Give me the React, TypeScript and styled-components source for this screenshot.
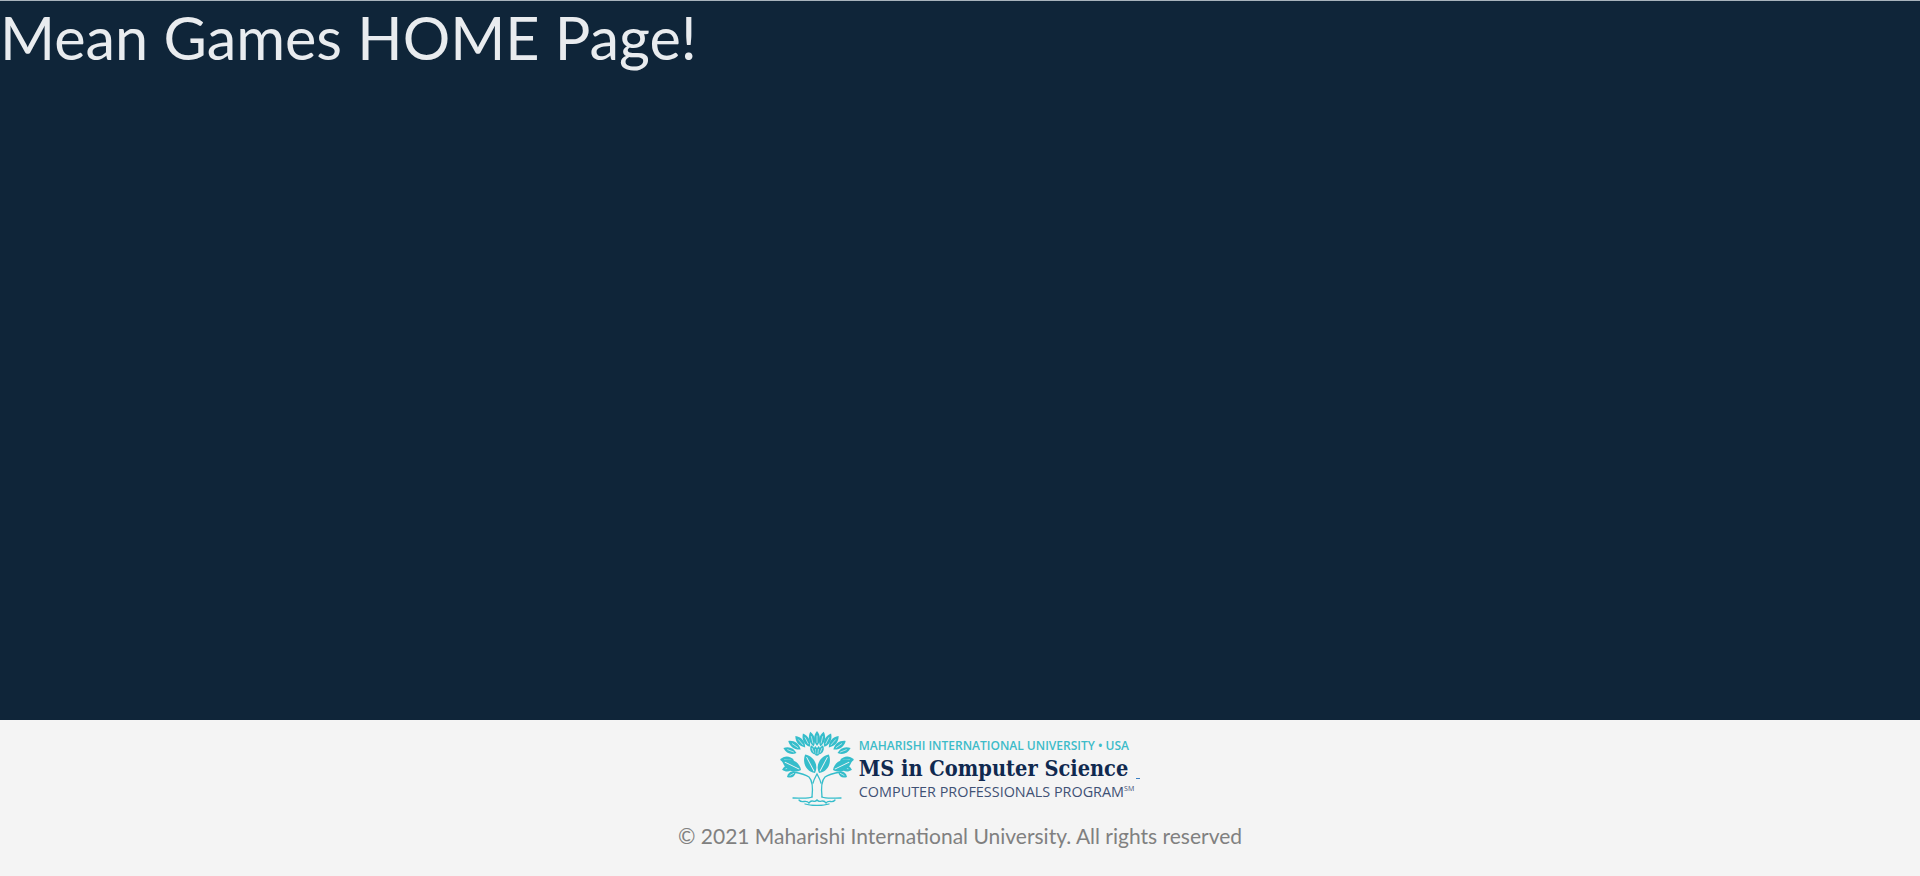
import styled, { createGlobalStyle } from 'styled-components'

const Global = createGlobalStyle`
    html, body {
        margin: 0;
        padding: 0;
    }
    body {
        font-family: "Lato", "Open Sans", sans-serif;
        background-color: #f4f4f4;
    }
`

// leaves of the canopy: angle from the tree centre, distance, length, half width
const leaves = [
    [0, 15, 15, 3.8], [-13, 15, 15, 3.8], [13, 15, 15, 3.8], [-27, 16, 15, 4], [27, 16, 15, 4],
    [-41, 18, 15, 4], [41, 18, 15, 4], [-55, 20, 15, 4], [55, 20, 15, 4],
    [-69, 22, 14, 4], [69, 22, 14, 4], [-88, 23, 14, 4.6], [88, 23, 14, 4.6],
    [-104, 24, 12, 4.2], [104, 24, 12, 4.2], [-118, 24, 10, 3.6], [118, 24, 10, 3.6],
    [-7, 5, 10, 2.8], [7, 5, 10, 2.8], [-21, 7, 10, 3], [21, 7, 10, 3],
]

// big veined leaves either side of the trunk: x, y, angle
const bigLeaves = [
    [35, 43, -28], [39, 43, 28],
    [21, 40, -64], [53, 40, 64],
]

function Tree() {
    return (
        <TreeSvg viewBox="0 0 74 76" aria-hidden="true">
            <g fill="#35bdcb">
                {leaves.map(([a, r, l, w], i) => (
                    <g key={i} transform={`translate(37 31) rotate(${a}) translate(0 ${-r})`}>
                        <path d={`M0 0C${w} ${-l * 0.3} ${w} ${-l * 0.7} 0 ${-l}C${-w} ${-l * 0.7} ${-w} ${-l * 0.3} 0 0Z`} />
                        <path d={`M0 ${-l * 0.2}V${-l * 0.7}`} stroke="#f4f4f4" strokeWidth="0.6" fill="none" />
                    </g>
                ))}
                {bigLeaves.map(([x, y, a], i) => (
                    <g key={i} transform={`translate(${x} ${y}) rotate(${a})`}>
                        <path d="M0 0C7 -5 7 -15 0 -21C-7 -15 -7 -5 0 0Z" />
                        <path d="M0 -2V-18" stroke="#f4f4f4" strokeWidth="0.9" fill="none" />
                    </g>
                ))}
            </g>
            <g fill="none" stroke="#35bdcb" strokeWidth="1.3" strokeLinecap="round">
                <path d="M32 67C33 58 33 51 29 47C25 44 19 43 13 42" />
                <path d="M42 67C41 58 41 51 45 47C49 44 55 43 61 42" />
                <path d="M33 53C34 49 36 46 37 44C38 46 40 49 41 53" />
                <path d="M32 67C28 69 20 68 13 68" />
                <path d="M42 67C46 69 54 68 61 68" />
                <path d="M19 70C22 74 26 69 29 73C32 68 34 74 37 70C40 74 43 68 46 73C49 69 52 74 55 70" />
                <path d="M25 74C31 76 43 76 49 74" />
            </g>
        </TreeSvg>
    )
}

export default function App() {
    return (
        <Page>
            <Global />
            <Main>
                <Title>Mean Games HOME Page!</Title>
            </Main>
            <Footer>
                <Logo href="#">
                    <Tree />
                    <LogoText>
                        <University>MAHARISHI INTERNATIONAL UNIVERSITY • USA</University>
                        <Degree>MS in Computer Science</Degree>
                        <Program>COMPUTER PROFESSIONALS PROGRAM<sup>SM</sup></Program>
                    </LogoText>
                    <Dash />
                </Logo>
                <Copyright>© 2021 Maharishi International University. All rights reserved</Copyright>
            </Footer>
        </Page>
    )
}

const Page = styled.div`
    display: flex;
    flex-direction: column;
    height: 876px;
    overflow: hidden;
`

const Main = styled.main`
    height: 720px;
    box-sizing: border-box;
    background-color: #0f2539;
    border-top: 1px solid #a9b4bd;
`

const Title = styled.h1`
    margin: 0;
    font-family: "Lato", sans-serif;
    font-size: 59.4px;
    font-weight: 400;
    line-height: 72px;
    color: #e9ecef;
`

const Footer = styled.footer`
    flex: 1;
    display: flex;
    flex-direction: column;
    align-items: center;
    background-color: #f4f4f4;
    padding-top: 10px;
`

const Logo = styled.a`
    display: flex;
    align-items: center;
    text-decoration: none;
    height: 76px;
`

const TreeSvg = styled.svg`
    width: 74px;
    height: 76px;
    margin-right: 5px;
`

const LogoText = styled.div`
    display: flex;
    flex-direction: column;
    gap: 2px;
    margin-top: 2px;
    white-space: nowrap;
    font-family: "Open Sans", sans-serif;
`

const University = styled.span`
    font-size: 12px;
    font-weight: 600;
    line-height: 16px;
    color: #3dbcc9;
`

const Degree = styled.span`
    font-family: "DejaVu Serif Condensed", "DejaVu Serif", serif;
    font-size: 21.6px;
    font-weight: 700;
    line-height: 25px;
    color: #10294f;
`

const Program = styled.span`
    font-size: 14.4px;
    line-height: 18px;
    color: #3f5175;

    sup {
        font-size: 7px;
        line-height: 0;
        vertical-align: 6px;
    }
`

const Dash = styled.span`
    width: 4px;
    height: 1px;
    margin: 20px 0 0 2px;
    background-color: #3a7fc4;
`

const Copyright = styled.p`
    margin: 15px 0 0;
    font-size: 21px;
    line-height: 30px;
    color: #808080;
`
